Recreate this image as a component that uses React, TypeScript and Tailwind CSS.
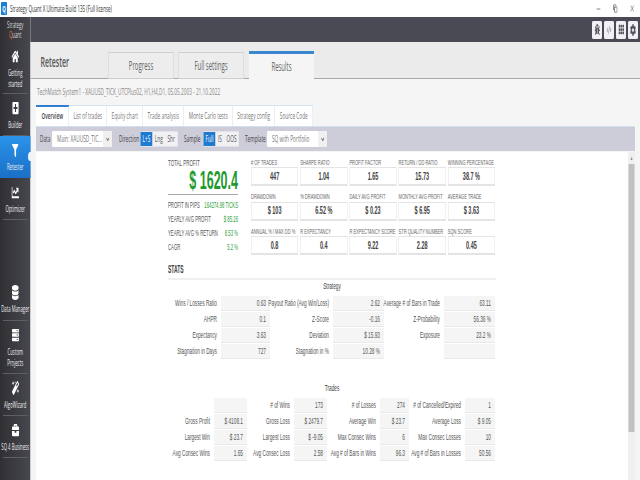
import { FaBriefcase, FaBug, FaChartLine, FaCode, FaCog, FaDatabase, FaFilter, FaHome, FaMagic, FaPlusSquare, FaServer, FaTh } from "react-icons/fa";
import { ChevronDown, Minus, Copy, X } from "lucide-react";

const ui = "font-['Open_Sans',sans-serif]";
const arial = "font-['Liberation_Sans',sans-serif]";

const innerTabs = [
  { label: "Overview", w: "w-[66px]" },
  { label: "List of trades", w: "w-[76px]" },
  { label: "Equity chart", w: "w-[72px]" },
  { label: "Trade analysis", w: "w-[82px]" },
  { label: "Monte Carlo tests", w: "w-[98px]" },
  { label: "Strategy config", w: "w-[84px]" },
  { label: "Source Code", w: "w-[76px]" },
];

const metrics = [
  ["# OF TRADES", "447"],
  ["SHARPE RATIO", "1.04"],
  ["PROFIT FACTOR", "1.65"],
  ["RETURN / DD RATIO", "15.73"],
  ["WINNING PERCENTAGE", "38.7 %"],
  ["DRAWDOWN", "$ 103"],
  ["% DRAWDOWN", "6.52 %"],
  ["DAILY AVG PROFIT", "$ 0.23"],
  ["MONTHLY AVG PROFIT", "$ 6.95"],
  ["AVERAGE TRADE", "$ 3.63"],
  ["ANNUAL % / MAX DD %", "0.8"],
  ["R EXPECTANCY", "0.4"],
  ["R EXPECTANCY SCORE", "9.22"],
  ["STR QUALITY NUMBER", "2.28"],
  ["SQN SCORE", "0.45"],
];

const summary = [
  ["PROFIT IN PIPS", "164274.98 TICKS"],
  ["YEARLY AVG PROFIT", "$ 85.26"],
  ["YEARLY AVG % RETURN", "8.53 %"],
  ["CAGR", "5.2 %"],
];

const strategyStats = [
  "Wins / Losses Ratio", "0.63", "Payout Ratio (Avg Win/Loss)", "2.62", "Average # of Bars in Trade", "63.11",
  "AHPR", "0.1", "Z-Score", "-0.16", "Z-Probability", "56.36 %",
  "Expectancy", "3.63", "Deviation", "$ 15.93", "Exposure", "23.2 %",
  "Stagnation in Days", "727", "Stagnation in %", "10.28 %", "", "",
];

const tradeStats = [
  "", "", "# of Wins", "173", "# of Losses", "274", "# of Cancelled/Expired", "1",
  "Gross Profit", "$ 4108.1", "Gross Loss", "$ 2479.7", "Average Win", "$ 23.7", "Average Loss", "$ 9.05",
  "Largest Win", "$ 23.7", "Largest Loss", "$ -9.05", "Max Consec Wins", "6", "Max Consec Losses", "10",
  "Avg Consec Wins", "1.65", "Avg Consec Loss", "2.58", "Avg # of Bars in Wins", "96.3", "Avg # of Bars in Losses", "50.56",
];

function NavItem({ icon, lines, active, h }: { icon: React.ReactNode; lines: string[]; active?: boolean; h: string }) {
  return (
    <div className={`relative shrink-0 ${h} flex flex-col items-center pt-[6px] text-[#eeeef0] ${active ? "bg-gradient-to-b from-[#2b93ea] to-[#1a70c6]" : ""}`}>
      <div className="h-[16px] flex items-center justify-center text-white">{icon}</div>
      <div className={`mt-[4px] text-[8.5px] leading-[10.5px] text-center whitespace-nowrap ${ui}`}>
        {lines.map((l) => (
          <div key={l}>{l}</div>
        ))}
      </div>
      {active && <div className="absolute right-[-5px] top-[16px] w-[10px] h-[9px] rounded-full bg-[#eef3fa]" />}
    </div>
  );
}

const Sep = () => <div className="shrink-0 h-px mx-[6px] bg-[#5e5e64]" />;

function Segment({ items, widths }: { items: string[]; widths: string[] }) {
  return (
    <div className="flex h-[16px] p-px bg-[#e2e2e8] rounded-[2px]">
      {items.map((it, i) => (
        <div key={it} className={`${widths[i]} flex items-center justify-center text-[9.5px] ${i === 0 ? "bg-[#1f7ad0] text-white" : "bg-[#f1f1f4] text-[#555]"}`}>
          {it}
        </div>
      ))}
    </div>
  );
}

function Select({ text, w }: { text: string; w: string }) {
  return (
    <div className={`${w} h-[16px] bg-white rounded-[2px] flex items-center text-[9.5px] text-[#777]`}>
      <span className="flex-1 pl-[10px] whitespace-nowrap">{text}</span>
      <span className="w-[18px] h-full flex items-center justify-center bg-[#f0f0f0] rounded-r-[2px]">
        <ChevronDown size={9} strokeWidth={3} className="text-[#555]" />
      </span>
    </div>
  );
}

function StatGrid({ cells, cols }: { cells: string[]; cols: string }) {
  return (
    <div className={`grid ${cols} gap-y-px ${arial}`}>
      {cells.map((c, i) =>
        i % 2 === 0 ? (
          <div key={i} className="h-[15px] pr-[8px] flex items-center justify-end text-[9.5px] text-[#555] whitespace-nowrap">{c}</div>
        ) : (
          <div key={i} className="h-[15px] pr-[8px] flex items-center justify-end text-[9.5px] text-[#555] bg-[#f5f5f5] border-b border-[#e9e9e9]">{c}</div>
        )
      )}
    </div>
  );
}

export default function App() {
  return (
    <div className="w-[1280px] h-[480px] overflow-hidden origin-top-left scale-x-50 bg-white flex flex-col">
      {/* title bar */}
      <div className={`h-[17px] shrink-0 flex items-center text-[#333] ${ui}`}>
        <div className="ml-[2px] w-[12px] h-[13px] bg-[#1c7fd6] rounded-[1px] flex items-center justify-center text-white text-[9px] font-bold">Q</div>
        <span className="ml-[6px] text-[9px]">Strategy Quant X Ultimate Build 135 (Full license)</span>
        <div className="ml-auto flex items-center gap-[24px] pr-[10px] text-[#333]">
          <Minus size={10} strokeWidth={2} />
          <Copy size={9} strokeWidth={2} />
          <X size={11} strokeWidth={1.2} />
        </div>
      </div>

      <div className="flex flex-1 min-h-0">
        {/* sidebar */}
        <div className="w-[61px] shrink-0 flex flex-col bg-gradient-to-r from-[#303034] to-[#47474f]">
          <div className={`h-[25px] shrink-0 flex flex-col items-center justify-center text-[#ddd] text-[8.5px] leading-[9.5px] ${ui}`}>
            <span>Strategy</span>
            <span><span className="text-[#e8743b]">Q</span>uant</span>
          </div>
          <NavItem h="h-[51px]" icon={<FaHome size={15} />} lines={["Getting", "started"]} />
          <Sep />
          <NavItem h="h-[41px]" icon={<FaPlusSquare size={14} />} lines={["Builder"]} />
          <Sep />
          <NavItem active h="h-[42px]" icon={<FaFilter size={13} />} lines={["Retester"]} />
          <NavItem h="h-[41px]" icon={<FaChartLine size={15} />} lines={["Optimizer"]} />
          <Sep />
          <div className="h-[58px] shrink-0" />
          <NavItem h="h-[42px]" icon={<FaDatabase size={15} />} lines={["Data Manager"]} />
          <Sep />
          <NavItem h="h-[52px]" icon={<FaServer size={14} />} lines={["Custom", "Projects"]} />
          <Sep />
          <NavItem h="h-[41px]" icon={<FaMagic size={14} />} lines={["AlgoWizard"]} />
          <Sep />
          <NavItem h="h-[41px]" icon={<FaBriefcase size={14} />} lines={["SQ 4 Business"]} />
          <Sep />
        </div>

        <div className="flex-1 min-w-0 flex flex-col">
          {/* top dark bar */}
          <div className="h-[25px] shrink-0 bg-[#4a4a54] flex items-center justify-end gap-[4px] pr-[4px]">
            {[<FaBug key="b" size={11} />, <FaCode key="c" size={10} className="opacity-50" />, <FaTh key="t" size={11} />, <FaCog key="g" size={12} />].map((ic, i) => (
              <div key={i} className="w-[20px] h-[18px] rounded-[2px] bg-[#f1f1f5] flex items-center justify-center text-[#55555f]">{ic}</div>
            ))}
          </div>

          {/* section header */}
          <div className={`h-[37px] shrink-0 bg-[#ebebeb] border-b border-[#a9a9a9] flex items-end ${ui}`}>
            <div className="w-[155px] self-start pt-[9px] pl-[20px] text-[#555] text-[14px] font-semibold">Retester</div>
            <div className="w-[132px] h-[27px] mb-[-1px] bg-[#ededed] border border-[#cfcfcf] flex items-center justify-center text-[12px] text-[#666]">Progress</div>
            <div className="w-[132px] h-[27px] mb-[-1px] ml-[8px] bg-[#ededed] border border-[#cfcfcf] flex items-center justify-center text-[12px] text-[#666]">Full settings</div>
            <div className="w-[130px] h-[28px] mb-[-1px] ml-[10px] bg-[#f5f5f5] border-t-[3px] border-[#3a87cf] flex items-center justify-center text-[12px] text-[#666]">Results</div>
          </div>

          <div className="flex-1 min-h-0 bg-[#f5f5f5] flex flex-col">
            <div className={`h-[26px] shrink-0 flex items-center pl-[13px] text-[9.5px] text-[#888] ${ui}`}>
              TechMatch System1 - XAUUSD_TICK_UTCPlus02, H1,H4,D1, 05.05.2003 - 21.10.2022
            </div>

            {/* inner tabs */}
            <div className={`h-[21px] shrink-0 ml-[11px] flex ${ui}`}>
              {innerTabs.map((t, i) => (
                <div
                  key={t.label}
                  className={`${t.w} flex items-center justify-center text-[9.5px] border-r border-[#d3e3f1] ${i === 0 ? "bg-white border-t-2 border-t-[#2f7fd0] text-[#444] font-semibold" : "bg-white border-t border-t-[#d3e3f1] text-[#777]"}`}
                >
                  {t.label}
                </div>
              ))}
            </div>

            {/* toolbar */}
            <div className={`h-[25px] shrink-0 ml-[11px] mr-[10px] bg-[#cdcdd9] border-t border-[#cfe0ef] flex items-center text-[9.5px] text-[#444] ${ui}`}>
              <span className="ml-[8px] w-[24px]">Data</span>
              <Select text="Main: XAUUSD_TIC..." w="w-[120px]" />
              <span className="ml-[14px] w-[42px]">Direction</span>
              <Segment items={["L+S", "Lng", "Shr"]} widths={["w-[24px]", "w-[25px]", "w-[25px]"]} />
              <span className="ml-[12px] w-[38px]">Sample</span>
              <Segment items={["Full", "IS", "OOS"]} widths={["w-[24px]", "w-[18px]", "w-[28px]"]} />
              <span className="ml-[12px] w-[44px]">Template</span>
              <Select text="SQ with Portfolio" w="w-[120px]" />
            </div>

            {/* results panel */}
            <div className="flex-1 min-h-0 ml-[11px] mr-[10px] mt-px bg-white flex">
              <div className="flex-1 min-w-0 pl-[264px] pt-[6px]">
                <div className="w-[656px]">
                  <div className="flex">
                    <div className={`w-[140px] shrink-0 ${arial}`}>
                      <div className="h-[12px] flex items-center text-[9px] text-[#555]">TOTAL PROFIT</div>
                      <div className="h-[22px] flex items-center justify-end text-[25px] font-bold text-[#1f9a2e]">$ 1620.4</div>
                      <div className="mt-[2px] mb-[3px] h-px bg-[#a8a8a8]" />
                      {summary.map(([k, v]) => (
                        <div key={k} className="h-[14px] flex items-center justify-between text-[8.5px] text-[#555] whitespace-nowrap">
                          <span>{k}</span>
                          <span className="text-[#2ba03a]">{v}</span>
                        </div>
                      ))}
                    </div>
                    <div className={`ml-[26px] w-[488px] grid grid-cols-5 gap-x-[4px] gap-y-[6.5px] ${arial}`}>
                      {metrics.map(([k, v]) => (
                        <div key={k}>
                          <div className="h-[9px] flex items-center text-[8px] text-[#666] whitespace-nowrap">{k}</div>
                          <div className="h-[19px] bg-white border border-[#e4e4e4] border-b-2 flex items-center justify-center text-[11px] font-bold text-[#444]">{v}</div>
                        </div>
                      ))}
                    </div>
                  </div>

                  <div className={`mt-[8px] h-[12px] flex items-center text-[10px] font-bold text-[#444] ${arial}`}>STATS</div>
                  <div className="mt-[3px] h-[2px] bg-[#f0f0f0]" />
                  <div className={`h-[12px] flex items-center justify-center text-[9.5px] text-[#444] ${arial}`}>Strategy</div>
                  <div className="mt-[4px]">
                    <StatGrid cells={strategyStats} cols="grid-cols-[106px_98px_126px_102px_120px_102px]" />
                  </div>

                  <div className={`mt-[23px] h-[12px] flex items-center justify-center text-[9.5px] text-[#444] ${arial}`}>Trades</div>
                  <div className="mt-[4px]">
                    <StatGrid cells={tradeStats} cols="grid-cols-[92px_66px_94px_66px_106px_58px_112px_60px]" />
                  </div>
                </div>
              </div>

              {/* scrollbar */}
              <div className="w-[14px] shrink-0 bg-[#f0f0f0] flex flex-col">
                <div className="h-[12px] flex items-center justify-center text-[#888] text-[6px]">▲</div>
                <div className="h-[268px] mx-px bg-[#c1c1c1]" />
              </div>
            </div>
          </div>
        </div>
      </div>
    </div>
  );
}
